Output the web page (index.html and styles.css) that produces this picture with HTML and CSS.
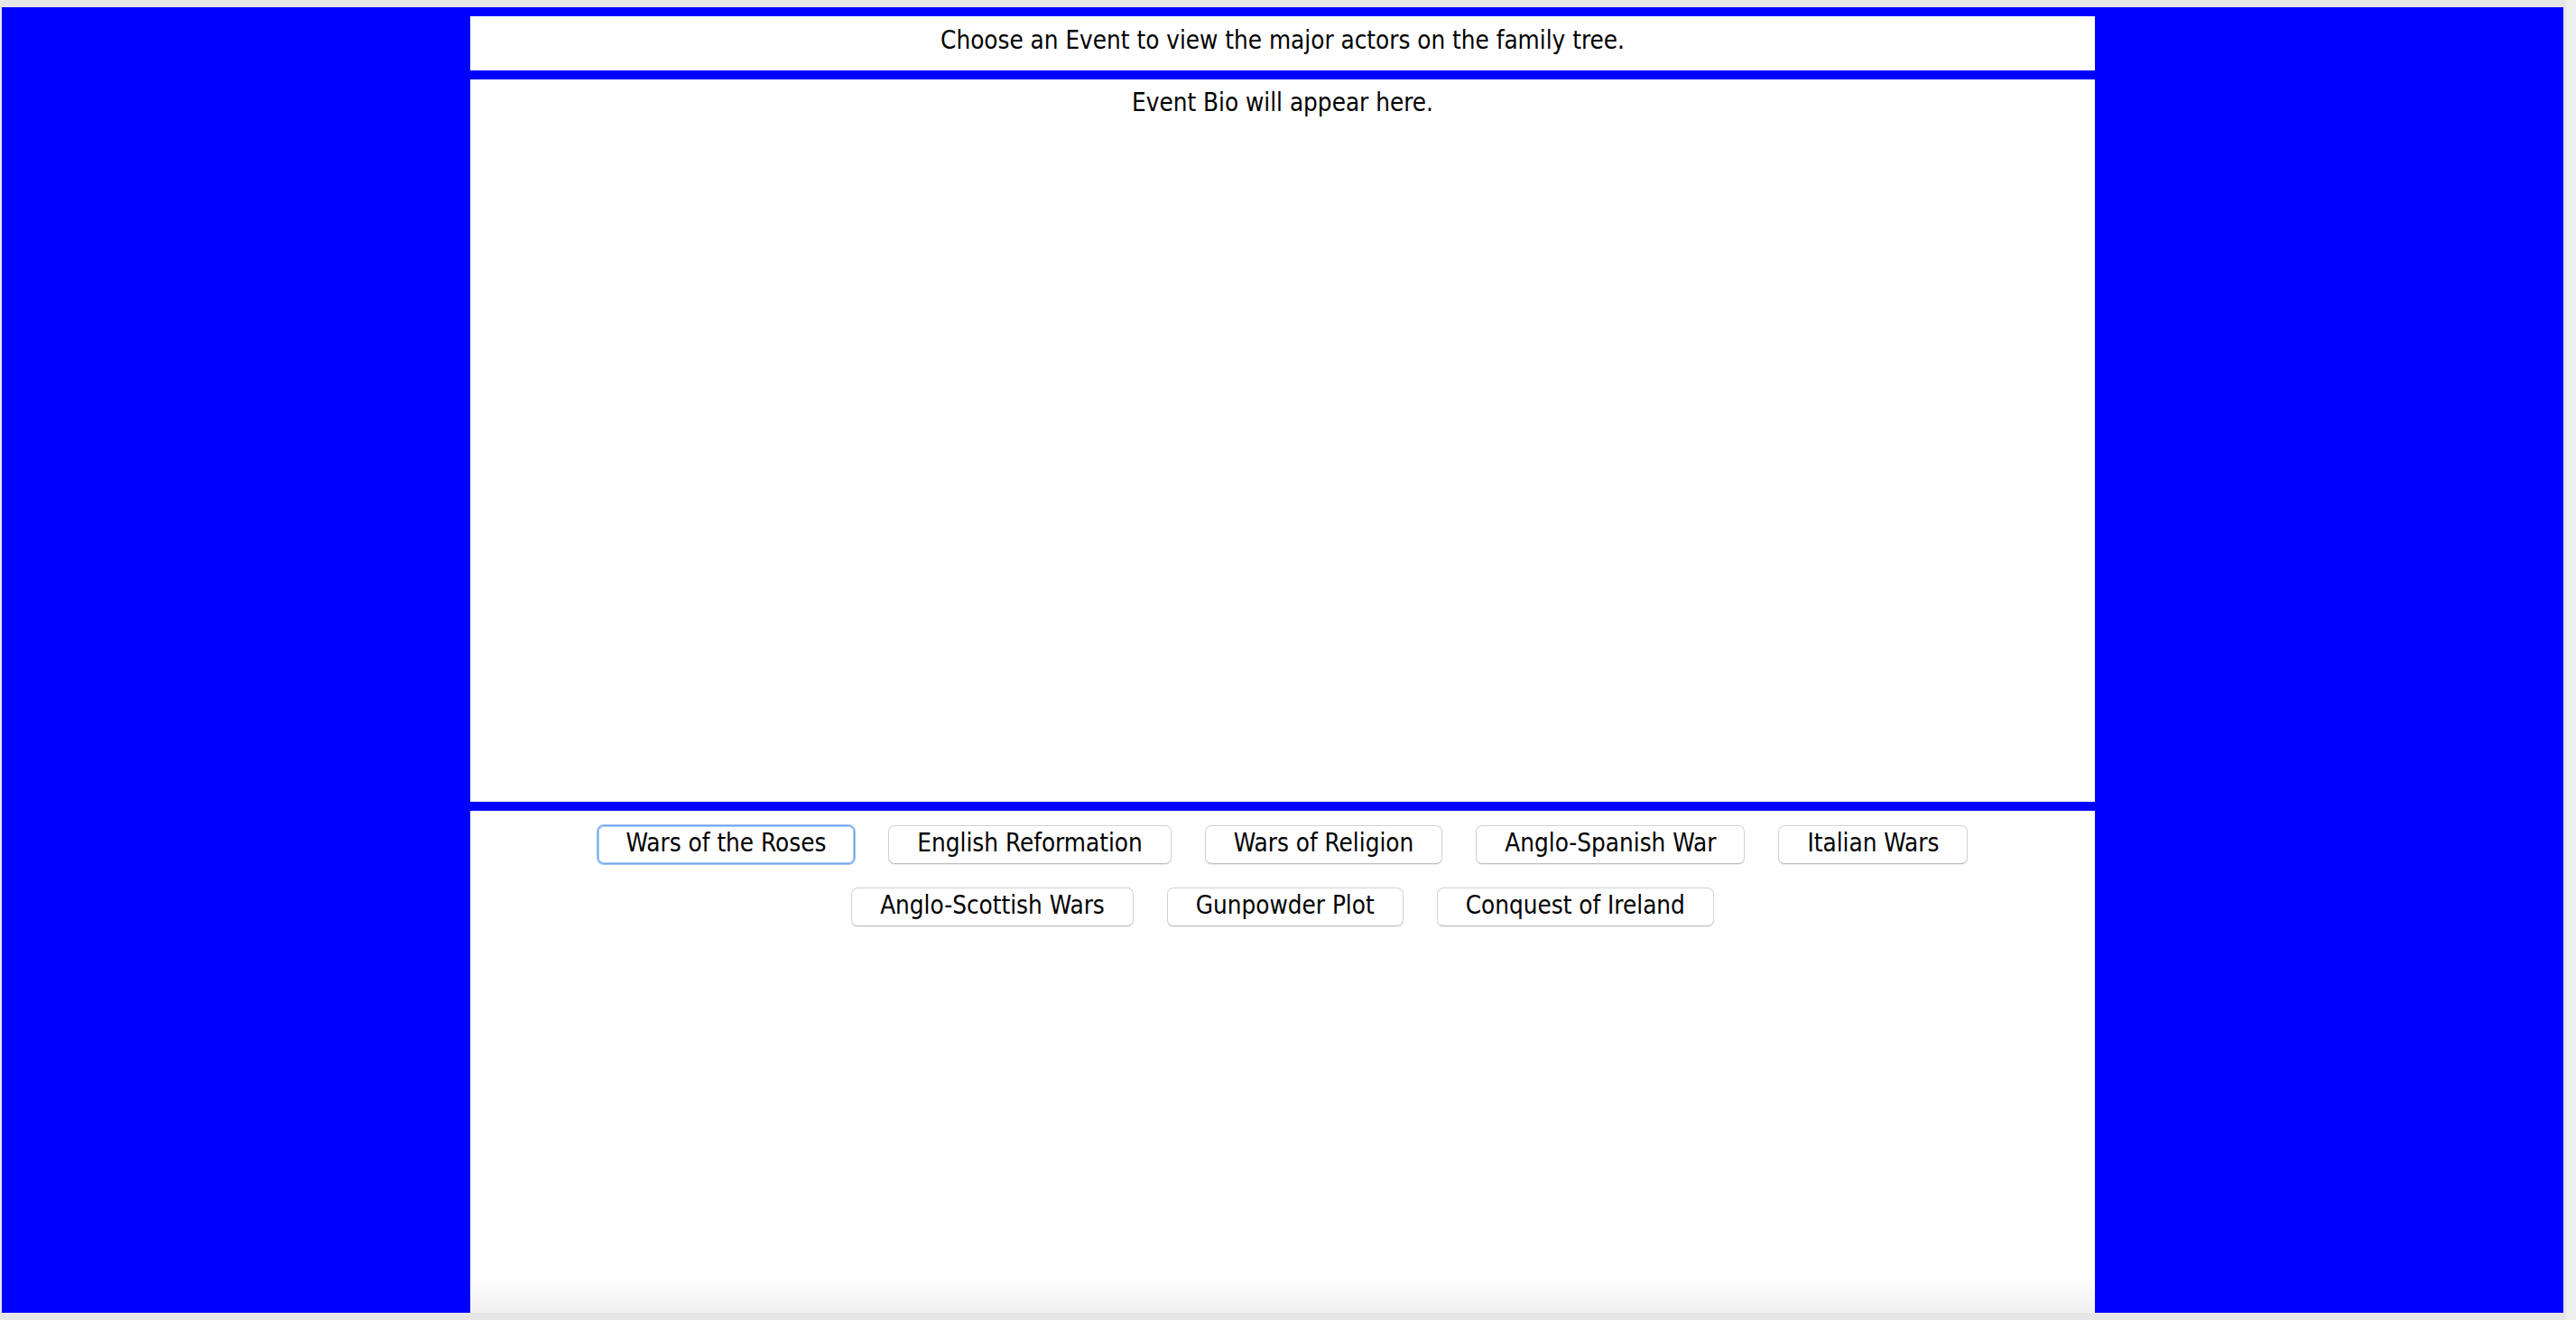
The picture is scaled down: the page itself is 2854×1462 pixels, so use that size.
FILE: index.html
```html
<!DOCTYPE html>
<html lang="en">
<head>
<meta charset="utf-8">
<title>Family Tree Events</title>
<link rel="stylesheet" href="styles.css">
</head>
<body>
  <div class="window">
    <main class="frame">
      <div class="column">
        <header class="panel prompt">Choose an Event to view the major actors on the family tree.</header>
        <section class="panel bio">Event Bio will appear here.</section>
        <section class="panel events">
          <div class="row">
            <button class="event-btn focused">Wars of the Roses</button>
            <button class="event-btn">English Reformation</button>
            <button class="event-btn">Wars of Religion</button>
            <button class="event-btn">Anglo-Spanish War</button>
            <button class="event-btn">Italian Wars</button>
          </div>
          <div class="row">
            <button class="event-btn">Anglo-Scottish Wars</button>
            <button class="event-btn">Gunpowder Plot</button>
            <button class="event-btn">Conquest of Ireland</button>
          </div>
        </section>
      </div>
    </main>
  </div>
</body>
</html>
```
FILE: styles.css
```css
html, body {
  margin: 0;
  padding: 0;
}

body {
  width: 2854px;
  height: 1462px;
  overflow: hidden;
  background: #e6e6e6;
  font-family: "DejaVu Sans Condensed", "DejaVu Sans", sans-serif;
  font-size: 27.6px;
  color: #000;
}

.window {
  box-sizing: border-box;
  height: 1462px;
  padding: 8px 14px 8px 2px;
  background: linear-gradient(to right, #e6e6e6 2843px, #efefef 2843px);
}

.frame {
  height: 100%;
  background: #0000ff;
  display: flex;
  justify-content: center;
}

.column {
  width: 1800px;
  display: flex;
  flex-direction: column;
  gap: 10px;
  padding-top: 10px;
}

.panel {
  background: #fff;
  box-sizing: border-box;
  text-align: center;
  line-height: 32px;
}

.prompt {
  height: 60px;
  padding-top: 11px;
}

.bio {
  height: 800px;
  padding-top: 10px;
}

.events {
  flex: 1;
  padding-top: 16px;
  display: flex;
  flex-direction: column;
  gap: 26px;
  background: linear-gradient(to bottom, #ffffff calc(100% - 40px), #f0f0f0 100%);
}

.row {
  display: flex;
  justify-content: center;
  gap: 37px;
}

.event-btn {
  font: inherit;
  line-height: 32px;
  color: #000;
  background: #fff;
  border: 1px solid #d2d2d2;
  border-bottom-color: #bdbdbd;
  border-radius: 7px;
  padding: 3px 31px 6px;
  box-shadow: 0 1px 1px rgba(0, 0, 0, 0.08);
  cursor: pointer;
}

.event-btn.focused {
  border-color: #6fa6ec;
  box-shadow: 0 0 0 1px #9cc4f6, inset 0 0 0 1px #a9cbf6;
}
```
